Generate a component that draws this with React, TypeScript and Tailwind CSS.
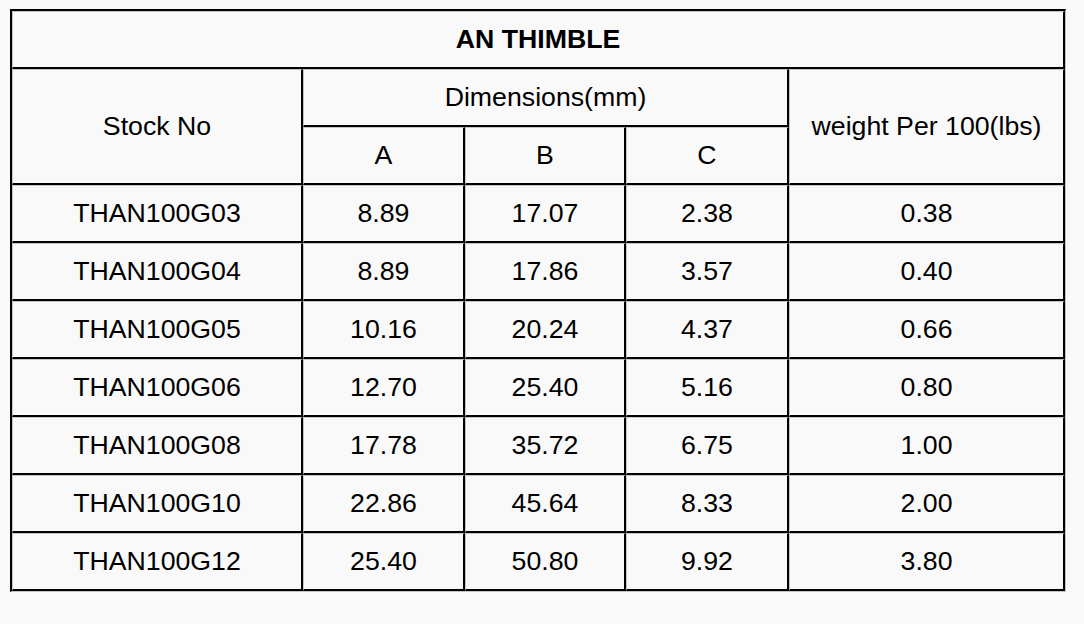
const rows: [string, string, string, string, string][] = [
  ["THAN100G03", "8.89", "17.07", "2.38", "0.38"],
  ["THAN100G04", "8.89", "17.86", "3.57", "0.40"],
  ["THAN100G05", "10.16", "20.24", "4.37", "0.66"],
  ["THAN100G06", "12.70", "25.40", "5.16", "0.80"],
  ["THAN100G08", "17.78", "35.72", "6.75", "1.00"],
  ["THAN100G10", "22.86", "45.64", "8.33", "2.00"],
  ["THAN100G12", "25.40", "50.80", "9.92", "3.80"],
];

const cell =
  "border-t border-l border-t-[#c4c4c4] border-l-[#c4c4c4] border-r-2 border-b-2 border-r-black border-b-black p-0 text-center align-middle";

export default function App() {
  return (
    <div className="min-h-[624px] bg-[#f9f9f9] pt-[9px] pl-[10px] font-['Liberation_Sans',Arial,sans-serif] text-[26.7px] leading-none text-black">
      <table className="w-[1056px] table-fixed border-separate border-spacing-0 border-t-2 border-l-2 border-r border-b border-t-black border-l-black border-r-[#c4c4c4] border-b-[#c4c4c4]">
        <colgroup>
          <col className="w-[291px]" />
          <col className="w-[162px]" />
          <col className="w-[161px]" />
          <col className="w-[163px]" />
          <col className="w-[276px]" />
        </colgroup>
        <thead>
          <tr className="h-[58px]">
            <th colSpan={5} className={`${cell} font-bold`}>
              AN THIMBLE
            </th>
          </tr>
          <tr className="h-[58px]">
            <th rowSpan={2} className={`${cell} font-normal`}>
              Stock No
            </th>
            <th colSpan={3} className={`${cell} font-normal`}>
              Dimensions(mm)
            </th>
            <th rowSpan={2} className={`${cell} font-normal`}>
              weight Per 100(lbs)
            </th>
          </tr>
          <tr className="h-[58px]">
            <th className={`${cell} font-normal`}>A</th>
            <th className={`${cell} font-normal`}>B</th>
            <th className={`${cell} font-normal`}>C</th>
          </tr>
        </thead>
        <tbody>
          {rows.map((r) => (
            <tr key={r[0]} className="h-[58px]">
              {r.map((v, i) => (
                <td key={i} className={cell}>
                  {v}
                </td>
              ))}
            </tr>
          ))}
        </tbody>
      </table>
    </div>
  );
}
